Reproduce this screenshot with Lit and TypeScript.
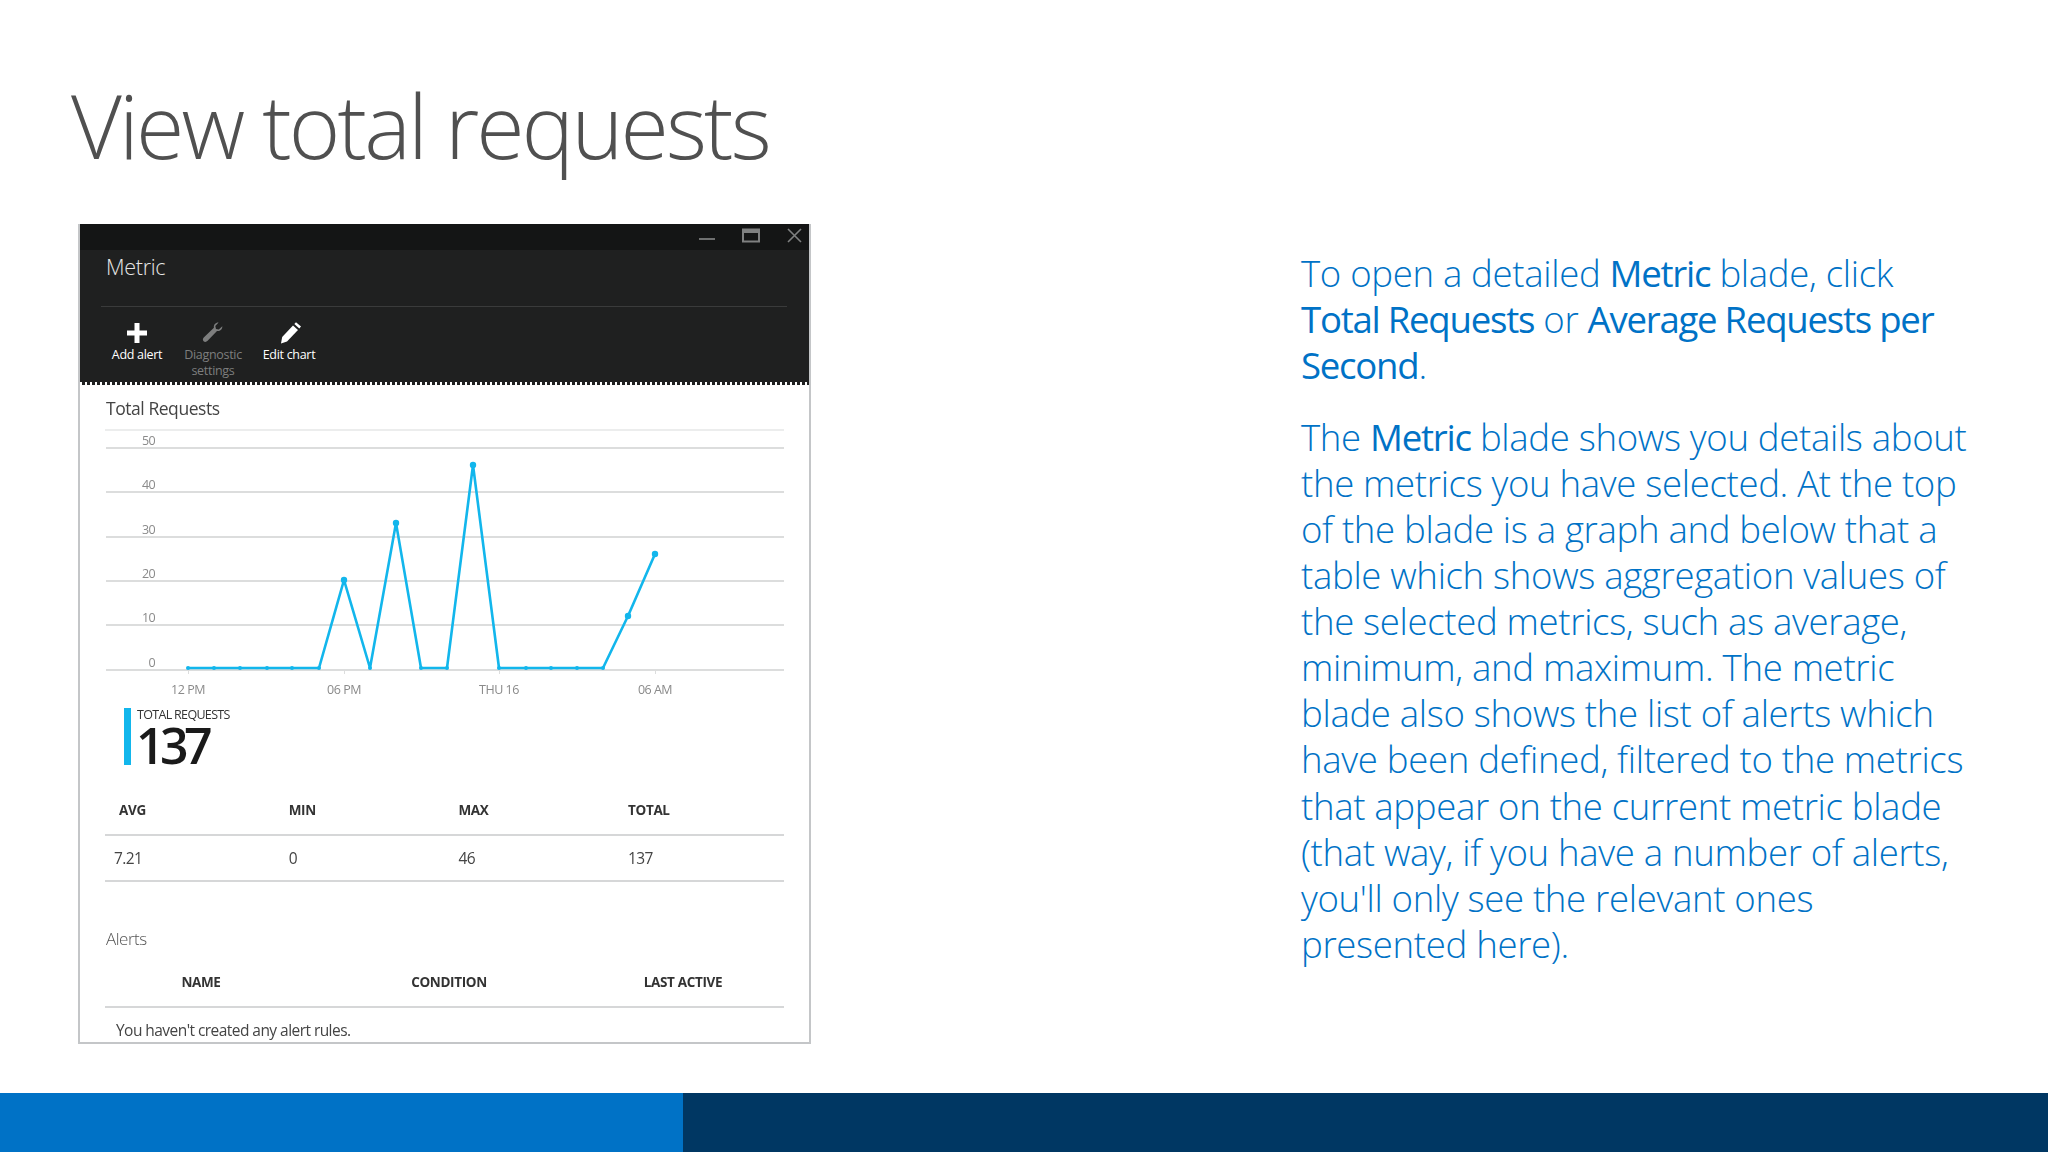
import { LitElement, html, css, svg } from "lit";
import { customElement } from "lit/decorators.js";

const pts: [number, number][] = [
  [188,668],[214,668],[240,668],[267,668],[292,668],[319,668],[344,580],[370,668],[396,523],[421,668],[447,668],[473,465],[499,668],[526,668],[551,668],[577,668],[603,668],[628,616],[655,554],
];
const grid = [ [447,"50"],[491,"40"],[536,"30"],[580,"20"],[624,"10"],[669,"0"] ] as [number,string][];
const xl = [[188,"12 PM"],[344,"06 PM"],[499,"THU 16"],[655,"06 AM"]] as [number,string][];

@customElement("app-root")
export class AppRoot extends LitElement {
  static styles = css`
    :host { display: block; }
    .slide { width: 2048px; height: 1152px; background: #fff; display: flex; flex-direction: column; overflow: hidden;
      font-family: "Open Sans", "Liberation Sans", sans-serif; }
    h1 { margin: 0; padding: 72px 0 0 71px; height: 224px; box-sizing: border-box; flex: none; font-size: 88px; line-height: 106px; font-weight: 300; color: #505050; letter-spacing: -2.85px; white-space: nowrap; }
    .main { height: 869px; flex: none; display: flex; }
    .panel { margin-left: 78px; width: 733px; height: 820px; flex: none; box-sizing: border-box; border: 2px solid #c4c6c8; border-top: 0; display: flex; flex-direction: column; overflow: hidden; position: relative; color: #3a3a3a; filter: blur(.35px); }
    .dark { height: 161px; background: #1f2020; position: relative; color: #fff; padding: 0 22px 0 25px; display: flex; flex-direction: column; flex: none; }
    .strip { height: 26px; margin: 0 -22px 0 -25px; padding: 0 7px 4px 0; box-sizing: border-box; background: #141515; display: flex; justify-content: flex-end; align-items: center; gap: 27px; flex: none; }
    .title { font-size: 21.5px; line-height: 30px; font-weight: 300; color: #e6e6e6; margin: 2px 0 0 1px; letter-spacing: -.3px; }
    .sep { height: 1px; background: #3a3b3b; margin: 24px 0 0 -4px; flex: none; }
    .cmds { display: flex; margin-left: -6px; padding-top: 14px; }
    .cmd { width: 76px; display: flex; flex-direction: column; align-items: center; font-size: 12.5px; line-height: 15.5px; letter-spacing: -.3px; text-align: center; font-weight: 400; }
    .cmd.off { color: #7d7e7e; }
    .cmd svg { display: block; height: 24px; width: 24px; margin-bottom: 2px; }
    .dots { position: absolute; left: 0; right: 0; bottom: 0; height: 3px; background: repeating-linear-gradient(90deg,#fff 0 2px,transparent 2px 5px); }
    .body { flex: 1; position: relative; padding: 0 25px; }
    .h2 { font-size: 17.5px; line-height: 22px; padding: 12px 0 0 1px; font-weight: 400; letter-spacing: -.45px; color: #444; }
    .toprule { height: 2px; background: #eceded; margin-top: 10px; }
    .chart { position: absolute; left: -80px; top: -385px; width: 860px; height: 800px; pointer-events: none; }
    .chart-space { height: 278px; }
    .kpi { height: 58px; display: flex; gap: 6px; margin-left: 19px; margin-top: -1px; }
    .kbar { width: 7px; height: 57px; background: #12b6ec; flex: none; }
    .klabel { font-size: 12.5px; line-height: 14px; letter-spacing: -.68px; color: #333; }
    .knum { font-size: 50px; line-height: 46px; color: #1a1a1a; letter-spacing: -4.6px; font-weight: 600; margin-left: -1px; }
    .cols { display: grid; grid-template-columns: repeat(4, 169.7px); }
    .thead { height: 70px; padding-top: 33px; box-sizing: border-box; border-bottom: 2px solid #d6d7d8; font-size: 13.5px; line-height: 22px; font-weight: 700; color: #333; letter-spacing: -.35px; }
    .thead div { padding-left: 14px; }
    .tbody { height: 46px; box-sizing: border-box; border-bottom: 2px solid #d6d7d8; font-size: 15.5px; line-height: 44px; letter-spacing: -.6px; color: #444; }
    .tbody div { padding-left: 14px; }
    .tbody div:first-child { padding-left: 9px; }
    .alerts { margin: 45px 0 0 1px; font-size: 17px; line-height: 24px; font-weight: 300; color: #555; letter-spacing: -.5px; }
    .ahead { height: 57px; box-sizing: border-box; padding-top: 19px; border-bottom: 2px solid #d6d7d8; display: grid; grid-template-columns: 192px 304px 164px; font-size: 13.5px; line-height: 24px; font-weight: 700; color: #333; letter-spacing: -.35px; }
    .ahead div { text-align: center; }
    .none { font-size: 15.5px; line-height: 24px; padding: 10px 0 0 11px; letter-spacing: -.55px; color: #444; white-space: nowrap; }
    .copy { margin-left: 490px; width: 680px; padding-top: 26px; font-size: 36.6px; line-height: 46.1px; font-weight: 300; color: #0072c6; letter-spacing: -.33px; white-space: nowrap; }
    .copy p { margin: 0 0 25.5px; }
    .copy b { font-weight: 400; letter-spacing: -1.25px; }
    .foot { height: 59px; flex: none; display: flex; background: #003763; }
    .foot i { display: block; width: 683px; background: #0072c6; }
  `;

  render() {
    const poly = pts.map(p => p.join(",")).join(" ");
    return html`<div class="slide">
      <h1>View total requests</h1>
      <div class="main">
        <div class="panel">
          <div class="dark">
            <div class="strip">
              <svg width="16" height="12" viewBox="0 0 16 12"><rect x="0" y="9" width="16" height="2" fill="#6f7070"/></svg>
              <svg width="18" height="15" viewBox="0 0 18 15"><rect x="1" y="1.5" width="16" height="12" fill="none" stroke="#7f8080" stroke-width="2"/><rect x="1" y="1" width="16" height="4" fill="#7f8080"/></svg>
              <svg width="15" height="15" viewBox="0 0 15 15"><path d="M1 1 14 14M14 1 1 14" stroke="#7f8080" stroke-width="1.6"/></svg>
            </div>
            <div class="title">Metric</div>
            <div class="sep"></div>
            <div class="cmds">
              <div class="cmd"><svg viewBox="0 0 24 24"><path d="M9.5 2h5v7.5H22v5h-7.5V22h-5v-7.5H2v-5h7.5z" fill="#fff"/></svg>Add alert</div>
              <div class="cmd off"><svg viewBox="0 0 24 24"><path d="M17.6 1.600c-2.900-.2-5.200 2.300-4.700 5.200L3 16.200c-1.300 1.200-1.500 2.900-.4 4s2.900.8 4-.4l9.400-9.800c2.900.5 5.500-1.700 5.300-4.700l-3.500 3.200-2.800-.6-.7-2.800z" fill="#7d7e7e"/></svg>Diagnostic<br>settings</div>
              <div class="cmd"><svg viewBox="0 0 24 24"><path d="M4 22.500 5.200 16 16 4.500l5 4.500L10 20.500z" fill="#fff"/><path d="M17.300 3 19 1.200l5 4.300-1.700 1.900z" fill="#fff"/></svg>Edit chart</div>
            </div>
            <div class="dots"></div>
          </div>
          <div class="body">
            <div class="h2">Total Requests</div>
            <div class="toprule"></div>
            <div class="chart-space"></div>
            <svg class="chart" viewBox="0 0 860 800" font-family="Open Sans, sans-serif">
              ${grid.map(([y,t]) => svg`<rect x="106" y="${y}" width="678" height="2" fill="#dcdddd"/><text x="155" y="${y-2.5}" text-anchor="end" font-size="12.5" fill="#8a8a8a" letter-spacing="-.6">${t}</text>`)}
              ${xl.map(([x,t]) => svg`<rect x="${x}" y="670" width="1" height="4" fill="#dcdddd"/><text x="${x}" y="694" text-anchor="middle" font-size="12.5" fill="#8a8a8a" letter-spacing="-.5">${t}</text>`)}
              <polyline points="${poly}" fill="none" stroke="#12b6ec" stroke-width="2.6" stroke-linejoin="round"/>
              ${pts.map(([x,y]) => svg`<circle cx="${x}" cy="${y}" r="${y===668?2:3.2}" fill="#12b6ec"/>`)}
            </svg>
            <div class="kpi"><div class="kbar"></div><div><div class="klabel">TOTAL REQUESTS</div><div class="knum">137</div></div></div>
            <div class="cols thead"><div>AVG</div><div>MIN</div><div>MAX</div><div>TOTAL</div></div>
            <div class="cols tbody"><div>7.21</div><div>0</div><div>46</div><div>137</div></div>
            <div class="alerts">Alerts</div>
            <div class="ahead"><div>NAME</div><div>CONDITION</div><div>LAST ACTIVE</div></div>
            <div class="none">You haven't created any alert rules.</div>
          </div>
        </div>
        <div class="copy">
          <p>To open a detailed <b>Metric</b> blade, click<br><b>Total Requests</b> or <b>Average Requests per</b><br><b>Second</b>.</p>
          <p>The <b>Metric</b> blade shows you details about<br>the metrics you have selected. At the top<br>of the blade is a graph and below that a<br>table which shows aggregation values of<br>the selected metrics, such as average,<br>minimum, and maximum. The metric<br>blade also shows the list of alerts which<br>have been defined, filtered to the metrics<br>that appear on the current metric blade<br>(that way, if you have a number of alerts,<br>you'll only see the relevant ones<br>presented here).</p>
        </div>
      </div>
      <div class="foot"><i></i></div>
    </div>`;
  }
}
